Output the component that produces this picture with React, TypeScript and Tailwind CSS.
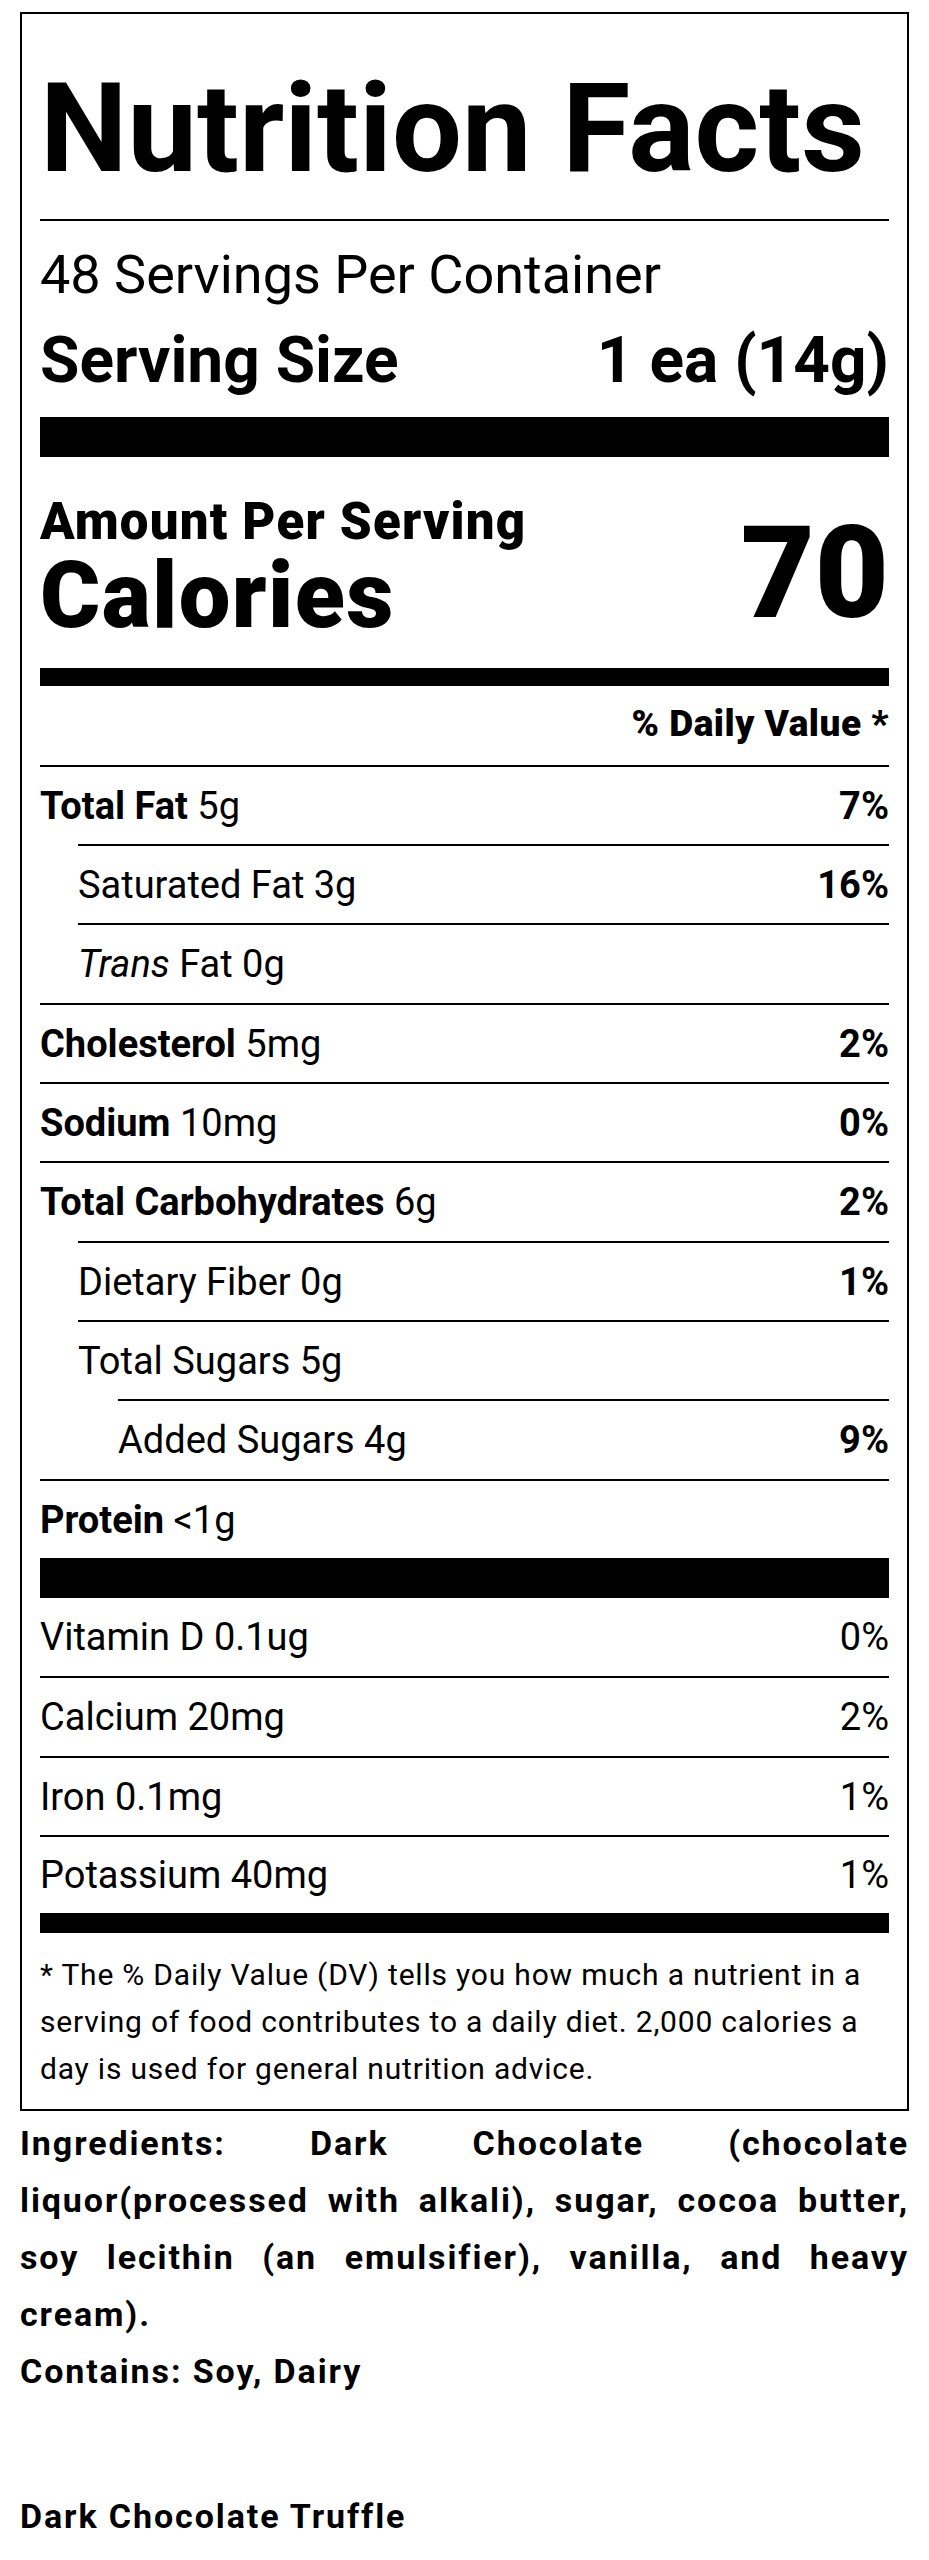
import React from "react";

type Row = {
  bold?: string;
  italic?: string;
  text: string;
  dv?: string;
  indent?: 0 | 1 | 2;
  tall?: boolean;
};

const rows: Row[] = [
  { bold: "Total Fat", text: " 5g", dv: "7%", indent: 0 },
  { text: "Saturated Fat 3g", dv: "16%", indent: 1 },
  { italic: "Trans", text: " Fat 0g", indent: 1, tall: true },
  { bold: "Cholesterol", text: " 5mg", dv: "2%", indent: 0 },
  { bold: "Sodium", text: " 10mg", dv: "0%", indent: 0 },
  { bold: "Total Carbohydrates", text: " 6g", dv: "2%", indent: 0, tall: true },
  { text: "Dietary Fiber 0g", dv: "1%", indent: 1 },
  { text: "Total Sugars 5g", indent: 1 },
  { text: "Added Sugars 4g", dv: "9%", indent: 2, tall: true },
  { bold: "Protein", text: " <1g", indent: 0 },
];

const vitamins = [
  { name: "Vitamin D 0.1ug", dv: "0%", cls: "h-[78px]" },
  { name: "Calcium 20mg", dv: "2%", cls: "h-[80px] border-t-2 border-black" },
  { name: "Iron 0.1mg", dv: "1%", cls: "h-[79px] border-t-2 border-black" },
  { name: "Potassium 40mg", dv: "1%", cls: "h-[78px] border-t-2 border-black" },
];

export default function App() {
  return (
    <div
      className="w-[929px] min-h-[2560px] bg-white text-black px-[20px] pt-[12px]"
      style={{ fontFamily: "Roboto, 'Noto Sans', sans-serif" }}
    >
      <div className="border-2 border-black px-[18px] pt-[53px] pb-[17px]">
        <h1 className="text-[124px] leading-[124px] font-bold">Nutrition Facts</h1>
        <div className="mt-[28px] h-[2px] bg-black" />
        <div className="mt-[24px] text-[54px] leading-[60px] font-normal">
          48 Servings Per Container
        </div>
        <div className="mt-[20px] flex justify-between text-[64px] leading-[72px] font-bold">
          <span>Serving Size</span>
          <span>1 ea (14g)</span>
        </div>
        <div className="mt-[20px] h-[40px] bg-black" />
        <div className="mt-[39px] flex justify-between items-end">
          <div className="flex flex-col font-black">
            <span className="text-[51px] leading-[52px] tracking-[1.2px]">Amount Per Serving</span>
            <span className="mt-[3px] text-[92px] leading-[90px] tracking-[1.4px]">Calories</span>
          </div>
          <span className="mb-[4px] text-[128px] leading-none font-black">70</span>
        </div>
        <div className="mt-[27px] h-[18px] bg-black" />
        <div className="mt-[18px] text-right text-[37px] leading-[40px] font-black tracking-[0.5px]">
          % Daily Value *
        </div>
        <div className="mt-[21px]">
          {rows.map((r, i) => (
            <div
              key={i}
              className={
                "flex items-center justify-between border-t-2 border-black text-[38px] leading-[44px] " +
                (r.tall ? "h-[80px] " : "h-[79px] ") +
                (r.indent === 1 ? "ml-[38px]" : r.indent === 2 ? "ml-[78px]" : "")
              }
            >
              <span>
                {r.bold && <span className="font-bold">{r.bold}</span>}
                {r.italic && <span className="italic">{r.italic}</span>}
                {r.text}
              </span>
              {r.dv && <span className="font-bold">{r.dv}</span>}
            </div>
          ))}
        </div>
        <div className="h-[40px] bg-black" />
        {vitamins.map((v, i) => (
          <div
            key={i}
            className={"flex items-center justify-between text-[38px] leading-[44px] " + v.cls}
          >
            <span>{v.name}</span>
            <span>{v.dv}</span>
          </div>
        ))}
        <div className="h-[20px] bg-black" />
        <p className="mt-[18px] text-[30px] leading-[47px] tracking-[0.8px]">
          * The % Daily Value (DV) tells you how much a nutrient in a serving of food contributes to a
          daily diet. 2,000 calories a day is used for general nutrition advice.
        </p>
      </div>
      <div className="mt-[4px] text-[34px] leading-[57px] font-bold tracking-[1.9px]">
        <p className="text-justify">
          Ingredients: Dark Chocolate (chocolate liquor(processed with alkali), sugar, cocoa butter,
          soy lecithin (an emulsifier), vanilla, and heavy cream).
        </p>
        <p>Contains: Soy, Dairy</p>
        <p className="mt-[88px]">Dark Chocolate Truffle</p>
      </div>
    </div>
  );
}
